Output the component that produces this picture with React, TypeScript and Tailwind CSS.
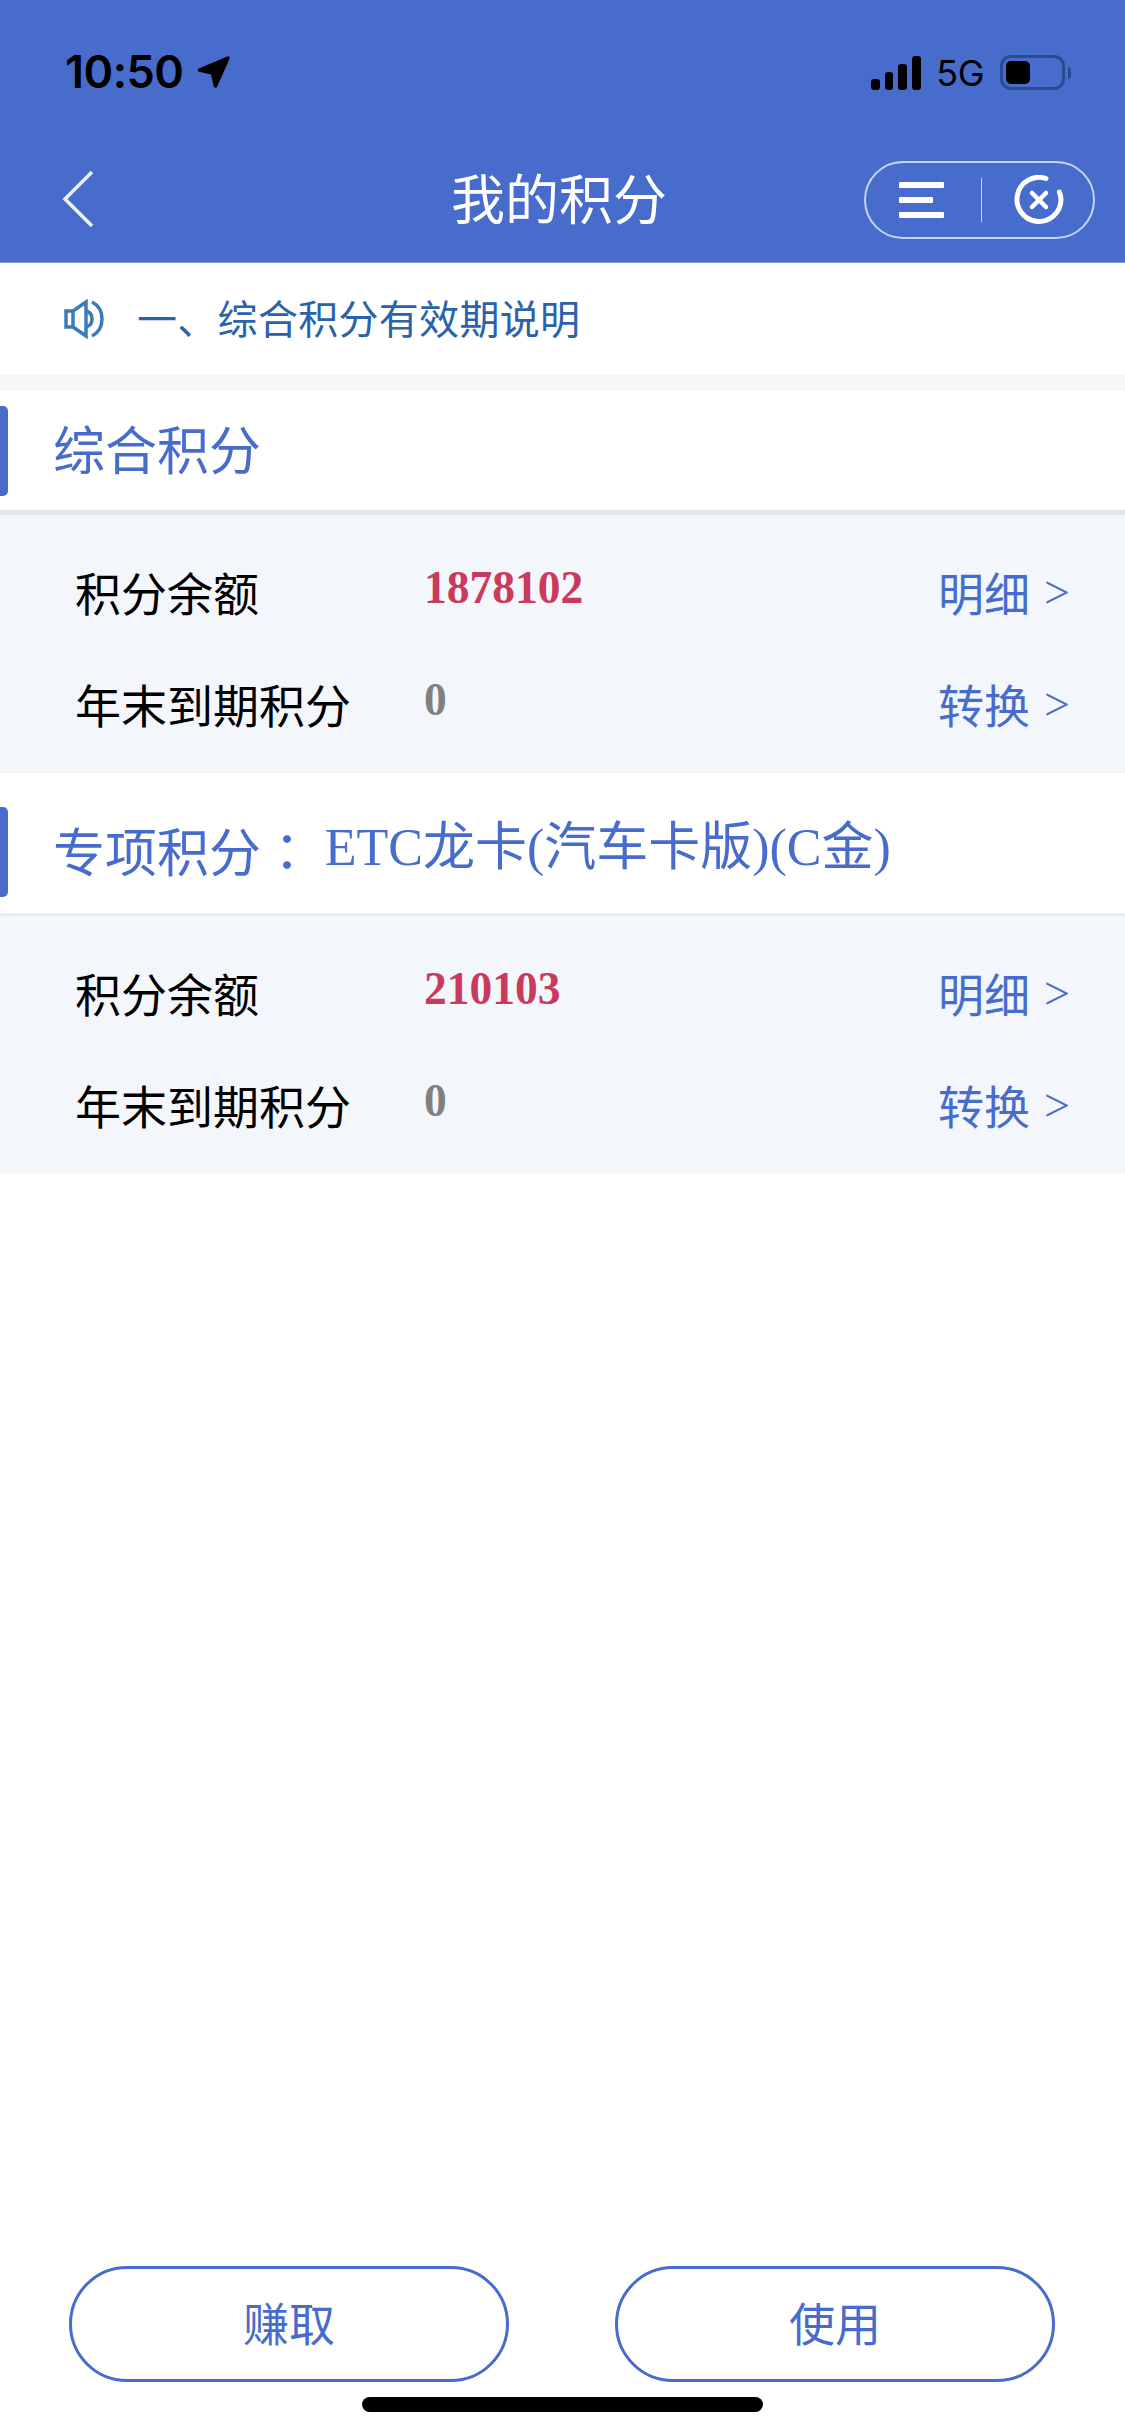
import type { ReactNode } from 'react';

const CJK = "font-['Noto_Sans_CJK_SC','Noto_Sans',sans-serif]";
const SERIF = "font-['Liberation_Serif','Noto_Sans_CJK_SC',serif]";

function StatusBar() {
  return (
    <div className="flex h-[54px] items-start justify-between pl-[65px] pr-[54px]">
      <div className="flex items-center">
        <span className="font-['Inter',sans-serif] text-[45px] leading-[34px] font-semibold tracking-[-0.5px] text-black">
          10:50
        </span>
        <svg className="ml-[13px] h-[34px] w-[34px]" viewBox="0 0 34 34">
          <path d="M2.5 15 31 3 18.5 31 15.5 18Z" fill="#000" stroke="#000" strokeWidth="3.5" strokeLinejoin="round" />
        </svg>
      </div>
      <div className="flex items-center">
        <svg className="h-[34px] w-[50px]" viewBox="0 0 50 34" fill="#000">
          <rect x="0" y="23" width="9" height="11" rx="3" />
          <rect x="14" y="16" width="8" height="18" rx="3" />
          <rect x="27" y="8" width="9" height="26" rx="3" />
          <rect x="41" y="0" width="9" height="34" rx="3" />
        </svg>
        <span className="ml-[15px] font-['Inter',sans-serif] text-[36px] leading-[34px] tracking-[-0.5px] text-black">
          5G
        </span>
        <div className="ml-[16px] flex items-center">
          <div className="flex h-[35px] w-[65px] items-center rounded-[11px] border-[3px] border-[#2b4a90] pl-[3px]">
            <div className="h-[23px] w-[24px] rounded-[5px] bg-black" />
          </div>
          <div className="ml-[3px] h-[12px] w-[3px] rounded-r-full bg-[#2b4a90]" />
        </div>
      </div>
    </div>
  );
}

function NavBar() {
  return (
    <div className="mt-[52px] grid h-[78px] grid-cols-[389px_auto_1fr] items-center pl-[62px] pr-[30px]">
      <svg className="mb-[3px] h-[58px] w-[32px]" viewBox="0 0 32 58" fill="none">
        <path d="M30 2 3 29l27 27" stroke="#fff" strokeWidth="3.5" opacity="0.9" />
      </svg>
      <h1 className={`${CJK} mb-[6px] text-[54px] leading-[72px] text-white`}>我的积分</h1>
      <div className="flex justify-end">
        <div className="flex h-[78px] w-[231px] items-center rounded-full border-2 border-white/70 pl-[33px]">
          <svg className="h-[38px] w-[46px]" viewBox="0 0 46 38" fill="#fff">
            <rect x="0" y="1" width="45" height="6" rx="1" />
            <rect x="0" y="16" width="34" height="6" rx="1" />
            <rect x="0" y="31" width="45" height="6" rx="1" />
          </svg>
          <div className="ml-[36px] h-[44px] w-[1px] bg-white/70" />
          <svg className="ml-[32px] h-[50px] w-[50px]" viewBox="0 0 50 50" fill="none" stroke="#fff" strokeLinecap="round">
            <path d="M32 3.5A22 22 0 1 0 47 25c0-3-.6-5.6-1.6-8" strokeWidth="5" />
            <path d="m18 18 14 14M32 18 18 32" strokeWidth="4.5" />
          </svg>
        </div>
      </div>
    </div>
  );
}

function Notice() {
  return (
    <div className="flex h-[112px] items-center bg-white pl-[64px]">
      <svg className="h-[40px] w-[40px]" viewBox="0 0 40 40" fill="none" stroke="#3d7ab8" strokeWidth="3.5">
        <path d="M2 12h7v16H2zM9 12 22 3v34L9 28" />
        <path d="M22 12c4 1 6 4 6 8s-2 7-6 8" />
        <path d="M28 3c6 3 10 9 10 17s-4 14-10 17" />
      </svg>
      <span className={`${CJK} mb-[4px] ml-[33px] text-[40px] leading-[48px] tracking-[0.3px] text-[#2a62ac]`}>一、综合积分有效期说明</span>
    </div>
  );
}

function SectionHead({ className, line, children }: { className: string; line: string; children: ReactNode }) {
  return (
    <div className={`flex items-center bg-white ${className} ${line}`}>
      <div className="h-[90px] w-[8px] rounded-r-[5px] bg-[#476ccc]" />
      <div className="ml-[45px] flex items-center whitespace-pre text-[#476ccc]">{children}</div>
    </div>
  );
}

function Row({ label, value, valueClass, link }: { label: string; value: string; valueClass: string; link: string }) {
  return (
    <div className="flex h-[112px] items-center pl-[75px] pr-[55px]">
      <span className={`${CJK} mb-[5px] w-[349px] text-[46px] leading-[60px] text-black`}>{label}</span>
      <span className={`font-['Liberation_Serif',serif] mb-[10px] flex-1 text-[45.5px] leading-[60px] font-bold ${valueClass}`}>
        {value}
      </span>
      <span className={`${CJK} mb-[5px] text-[46px] leading-[60px] text-[#476ccc]`}>{link}</span>
      <span className={`${SERIF} mb-[1px] ml-[14px] text-[46px] leading-[60px] text-[#476ccc]`}>&gt;</span>
    </div>
  );
}

function Panel({ total, expiring }: { total: string; expiring: string }) {
  return (
    <div className="bg-[#f3f6fa] pt-[22px] pb-[11px]">
      <Row label="积分余额" value={total} valueClass="text-[#c93a5c]" link="明细" />
      <Row label="年末到期积分" value={expiring} valueClass="text-[#808080]" link="转换" />
    </div>
  );
}

function PillButton({ children }: { children: ReactNode }) {
  return (
    <button className={`${CJK} h-[116px] w-[440px] rounded-[58px] border-[3px] border-[#476ccc] bg-white pb-[6px] text-[46px] text-[#476ccc]`}>
      {children}
    </button>
  );
}

export default function App() {
  return (
    <div className="flex h-[2435px] w-[1125px] flex-col overflow-hidden bg-white">
      <header className="h-[263px] border-b border-[#7f98dc] bg-[#476ccc] pt-[55px]">
        <StatusBar />
        <NavBar />
      </header>

      <Notice />
      <div className="h-[16px] bg-[#f7f7f7]" />

      <SectionHead className="h-[124px]" line="border-b-[5px] border-[#e5e6ea]">
        <span className={`${CJK} mb-[5px] text-[52px] leading-[64px]`}>综合积分</span>
      </SectionHead>
      <Panel total="1878102" expiring="0" />

      <div className="h-[1px] bg-[#ecedf0]" />
      <SectionHead className="h-[143px] pt-[18px]" line="border-b-[3px] border-[#ebebee]">
        <span className={`${CJK} mb-[5px] text-[52px] leading-[64px]`}>专项积分</span>
        <span className="mb-[5px] font-['Noto_Sans_CJK_TC',sans-serif] text-[52px] leading-[64px]">： </span>
        <span className={`${SERIF} mb-[8px] text-[52px] leading-[64px]`}>ETC龙卡(汽车卡版)(C金)</span>
      </SectionHead>
      <Panel total="210103" expiring="0" />

      <div className="flex-1" />

      <footer className="flex justify-between pl-[69px] pr-[70px]">
        <PillButton>赚取</PillButton>
        <PillButton>使用</PillButton>
      </footer>
      <div className="mx-auto mt-[15px] mb-[23px] h-[15px] w-[401px] rounded-full bg-black" />
    </div>
  );
}
